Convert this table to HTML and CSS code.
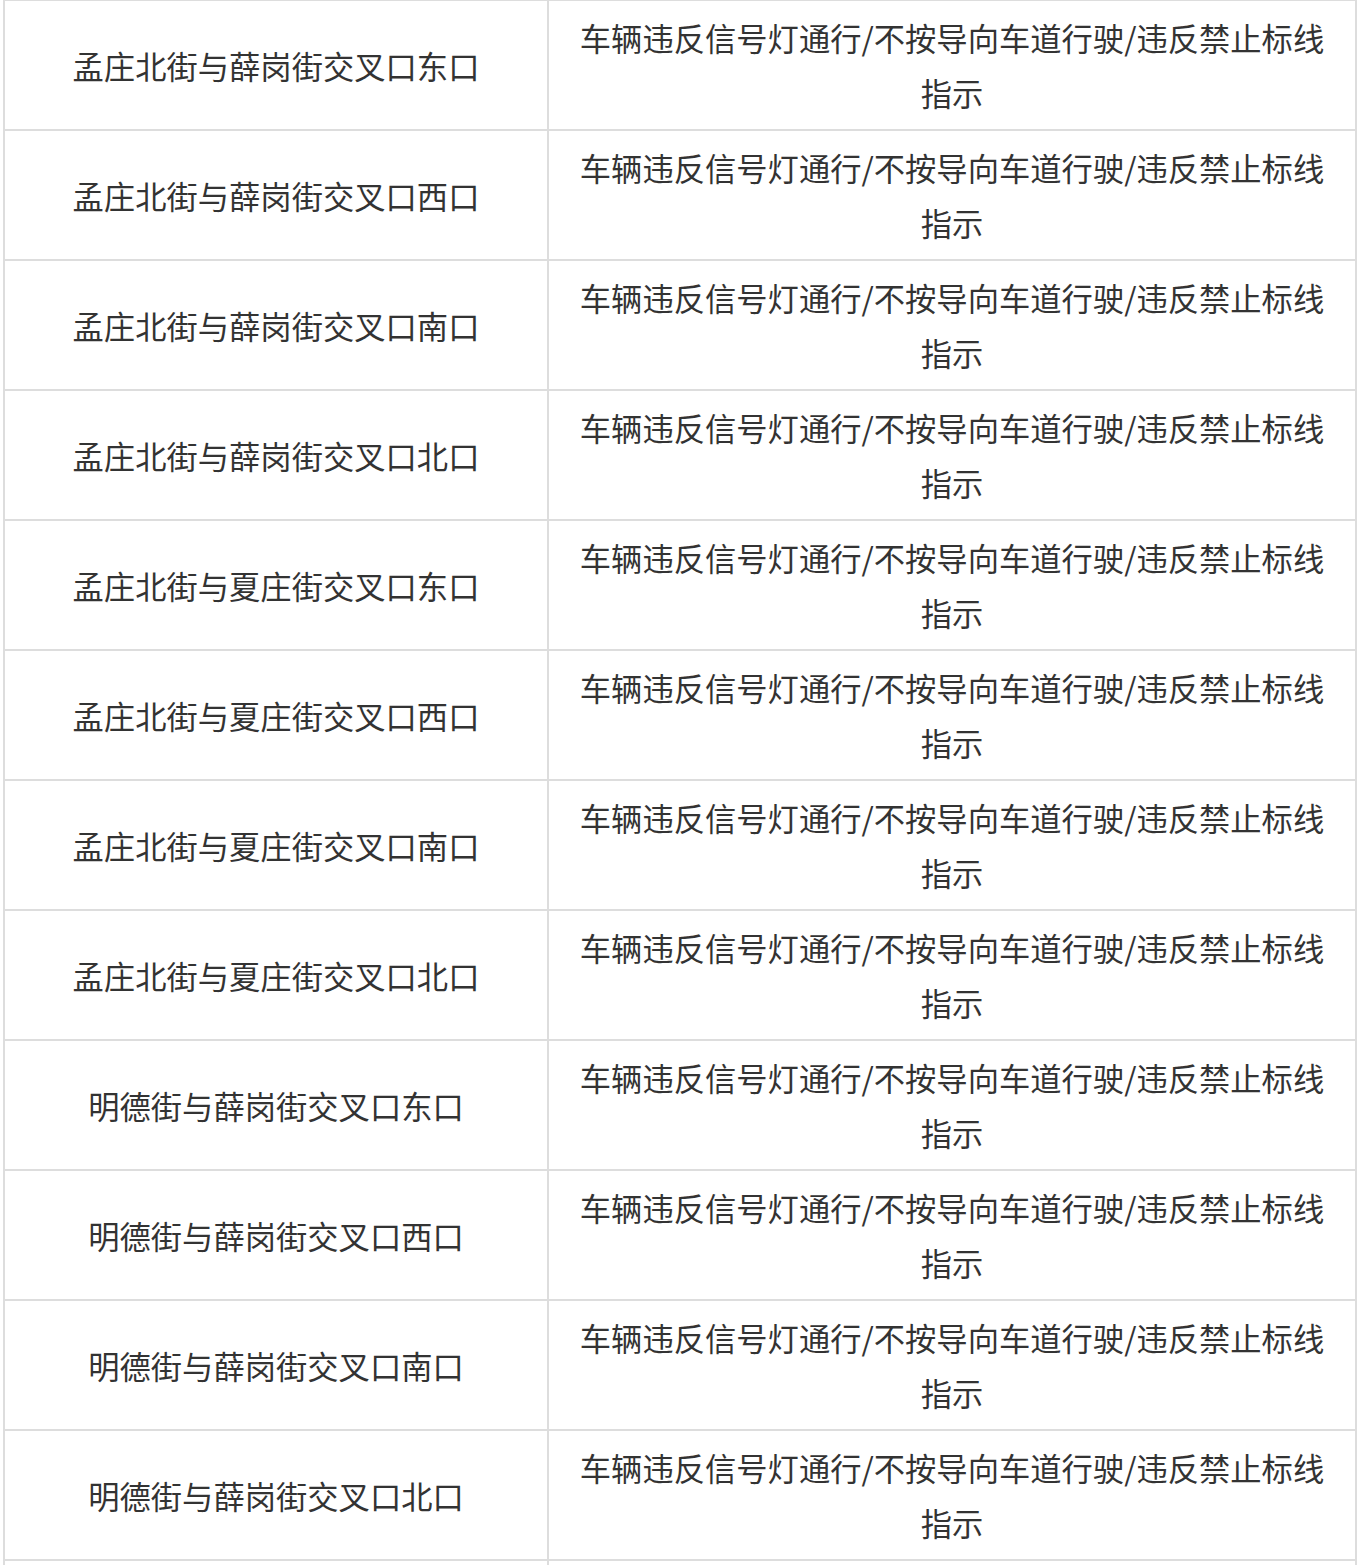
FILE: index.html
```html
<!DOCTYPE html>
<html lang="zh-CN">
<head>
<meta charset="utf-8">
<link rel="stylesheet" href="styles.css">
</head>
<body>
<div class="table">
  <div class="cell loc">孟庄北街与薛岗街交叉口东口</div><div class="cell act">车辆违反信号灯通行/不按导向车道行驶/违反禁止标线指示</div>
  <div class="cell loc">孟庄北街与薛岗街交叉口西口</div><div class="cell act">车辆违反信号灯通行/不按导向车道行驶/违反禁止标线指示</div>
  <div class="cell loc">孟庄北街与薛岗街交叉口南口</div><div class="cell act">车辆违反信号灯通行/不按导向车道行驶/违反禁止标线指示</div>
  <div class="cell loc">孟庄北街与薛岗街交叉口北口</div><div class="cell act">车辆违反信号灯通行/不按导向车道行驶/违反禁止标线指示</div>
  <div class="cell loc">孟庄北街与夏庄街交叉口东口</div><div class="cell act">车辆违反信号灯通行/不按导向车道行驶/违反禁止标线指示</div>
  <div class="cell loc">孟庄北街与夏庄街交叉口西口</div><div class="cell act">车辆违反信号灯通行/不按导向车道行驶/违反禁止标线指示</div>
  <div class="cell loc">孟庄北街与夏庄街交叉口南口</div><div class="cell act">车辆违反信号灯通行/不按导向车道行驶/违反禁止标线指示</div>
  <div class="cell loc">孟庄北街与夏庄街交叉口北口</div><div class="cell act">车辆违反信号灯通行/不按导向车道行驶/违反禁止标线指示</div>
  <div class="cell loc">明德街与薛岗街交叉口东口</div><div class="cell act">车辆违反信号灯通行/不按导向车道行驶/违反禁止标线指示</div>
  <div class="cell loc">明德街与薛岗街交叉口西口</div><div class="cell act">车辆违反信号灯通行/不按导向车道行驶/违反禁止标线指示</div>
  <div class="cell loc">明德街与薛岗街交叉口南口</div><div class="cell act">车辆违反信号灯通行/不按导向车道行驶/违反禁止标线指示</div>
  <div class="cell loc">明德街与薛岗街交叉口北口</div><div class="cell act">车辆违反信号灯通行/不按导向车道行驶/违反禁止标线指示</div>
  <div class="cell loc">明德街与夏庄街交叉口东口</div><div class="cell act">车辆违反信号灯通行/不按导向车道行驶/违反禁止标线指示</div>
</div>
</body>
</html>
```
FILE: styles.css
```css
html, body {
  margin: 0;
  padding: 0;
  background: #ffffff;
}
body {
  padding-left: 3px;
  font-family: "Noto Sans CJK SC", "Noto Sans", sans-serif;
  color: #333333;
}
.table {
  display: grid;
  grid-template-columns: 544px 808px;
  width: 1352px;
  margin-top: -1px;
  border-left: 2px solid #dddddd;
  border-top: 2px solid #dddddd;
}
.cell {
  box-sizing: border-box;
  height: 130px;
  border-right: 2px solid #dddddd;
  border-bottom: 2px solid #dddddd;
  display: flex;
  align-items: center;
  justify-content: center;
  text-align: center;
  font-size: 31.3px;
  line-height: 55px;
  padding: 0 20px;
}
```
